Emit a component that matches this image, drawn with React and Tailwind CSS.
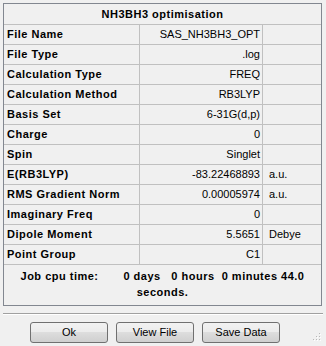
import React from "react";

const rows = [
  ["File Name", "SAS_NH3BH3_OPT", ""],
  ["File Type", ".log", ""],
  ["Calculation Type", "FREQ", ""],
  ["Calculation Method", "RB3LYP", ""],
  ["Basis Set", "6-31G(d,p)", ""],
  ["Charge", "0", ""],
  ["Spin", "Singlet", ""],
  ["E(RB3LYP)", "-83.22468893", "a.u."],
  ["RMS Gradient Norm", "0.00005974", "a.u."],
  ["Imaginary Freq", "0", ""],
  ["Dipole Moment", "5.5651", "Debye"],
  ["Point Group", "C1", ""],
];

function Btn({ children }) {
  return (
    <button className="w-[78px] h-[21px] rounded-[3px] border border-[#707070] bg-[linear-gradient(#f2f2f2_0%,#ebebeb_50%,#dddddd_50%,#cfcfcf_100%)] text-[11px] text-black flex items-center justify-center">
      {children}
    </button>
  );
}

export default function App() {
  return (
    <div
      className="relative w-[326px] h-[346px] bg-[#f0f0f0] text-black text-[11px] pt-[3px] overflow-hidden"
      style={{ fontFamily: '"Liberation Sans", Arial, sans-serif' }}
    >
      <div className="ml-[3px] w-[319px] h-[303px] border border-[#828790] flex flex-col">
        <div className="h-[21px] border-b border-[#c0c0c0] flex items-center justify-center font-bold tracking-[0.5px]">
          NH3BH3 optimisation
        </div>
        {rows.map(([l, v, u]) => (
          <div key={l} className="h-[20px] border-b border-[#c0c0c0] flex">
            <div className="w-[136px] border-r border-[#c0c0c0] pl-[3px] flex items-center font-bold tracking-[0.5px]">
              {l}
            </div>
            <div className="w-[123px] border-r border-[#c0c0c0] pr-[2px] flex items-center justify-end">
              {v}
            </div>
            <div className="flex-1 pl-[6px] flex items-center">{u}</div>
          </div>
        ))}
        <div className="pt-[3px] leading-[16px] font-bold tracking-[0.5px] text-center whitespace-pre">
          {"Job cpu time:       0 days   0 hours  0 minutes 44.0\nseconds."}
        </div>
      </div>
      <div className="ml-[3px] mt-[7px] w-[320px] h-[2px] border-t border-[#a0a0a0] border-b border-b-white" />
      <div className="mt-[7px] ml-[30px] flex gap-[8px]">
        <Btn>Ok</Btn>
        <Btn>View File</Btn>
        <Btn>Save Data</Btn>
      </div>
      <svg className="absolute right-[5px] bottom-[5px]" width="9" height="9" viewBox="0 0 9 9">
        {[
          [7, 1],
          [4, 4],
          [7, 4],
          [1, 7],
          [4, 7],
          [7, 7],
        ].map(([x, y]) => (
          <g key={`${x}-${y}`}>
            <rect x={x + 1} y={y + 1} width="1" height="1" fill="#ffffff" />
            <rect x={x} y={y} width="1" height="1" fill="#b8b8b8" />
          </g>
        ))}
      </svg>
    </div>
  );
}
